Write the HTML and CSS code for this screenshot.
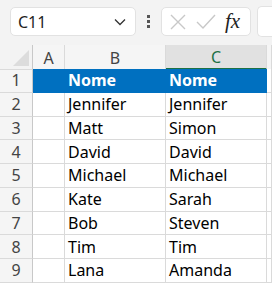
FILE: index.html
```html
<!DOCTYPE html>
<html lang="en">
<head>
    <meta charset="UTF-8">
    <title>Sheet</title>
    <link rel="stylesheet" href="styles.css">
</head>
<body>
    <div class="toolbar">
        <div class="name-box">
            <span class="cell-ref">C11</span>
            <svg class="chevron" width="12" height="8" viewBox="0 0 12 8"><path d="M1 1.5 L6 6.5 L11 1.5" fill="none" stroke="#333" stroke-width="1.3"/></svg>
        </div>
        <div class="dots"><i></i><i></i><i></i></div>
        <div class="formula-box">
            <svg width="20" height="20" viewBox="0 0 20 20"><path d="M3 3 L17 17 M17 3 L3 17" stroke="#c8c8c8" stroke-width="1.4"/></svg>
            <svg width="22" height="20" viewBox="0 0 22 20"><path d="M2 10 L8 16 L20 3" fill="none" stroke="#c8c8c8" stroke-width="1.4"/></svg>
            <span class="fx">fx</span>
        </div>
        <div class="formula-input"></div>
    </div>

    <div class="sheet">
        <div class="corner"><span class="triangle"></span></div>
        <div class="col-head">A</div>
        <div class="col-head">B</div>
        <div class="col-head selected">C</div>
        <div class="col-head rest"></div>
    </div>
    <div id="rows"></div>

    <script>
        const data = [
            ['Nome', 'Nome'],
            ['Jennifer', 'Jennifer'],
            ['Matt', 'Simon'],
            ['David', 'David'],
            ['Michael', 'Michael'],
            ['Kate', 'Sarah'],
            ['Bob', 'Steven'],
            ['Tim', 'Tim'],
            ['Lana', 'Amanda']
        ];
        const rows = document.getElementById('rows');

        data.forEach((row, i) => {
            const line = document.createElement('div');
            line.className = 'sheet row' + (i === 0 ? ' title' : '');
            line.innerHTML =
                `<div class="row-head">${i + 1}</div>` +
                `<div class="cell"></div>` +
                `<div class="cell">${row[0]}</div>` +
                `<div class="cell">${row[1]}</div>` +
                `<div class="cell rest"></div>`;
            rows.appendChild(line);
        });
    </script>
</body>
</html>
```

FILE: styles.css
```css
body {
    margin: 0;
    background-color: #ffffff;
    font-family: "Noto Sans", "Open Sans", sans-serif;
    overflow: hidden;
}
.toolbar {
    display: flex;
    align-items: center;
    height: 45px;
    padding-left: 10px;
    background-color: #f3f3f3;
    box-sizing: border-box;
    padding-bottom: 2px;
}
.name-box {
    display: flex;
    align-items: center;
    justify-content: space-between;
    width: 126px;
    height: 29px;
    padding: 0 9px 0 7px;
    box-sizing: border-box;
    background-color: #ffffff;
    border: 1px solid #e2e2e2;
    border-radius: 5px;
}
.cell-ref {
    font-size: 16px;
    color: #1f1f1f;
}
.dots {
    display: flex;
    flex-direction: column;
    gap: 2px;
    margin: 0 11px 0 11px;
}
.dots i {
    width: 3px;
    height: 3px;
    background-color: #555;
}
.formula-box {
    display: flex;
    align-items: center;
    gap: 7px;
    width: 90px;
    height: 29px;
    padding: 0 6px 0 6px;
    box-sizing: border-box;
    background-color: #ffffff;
    border: 1px solid #e2e2e2;
    border-radius: 5px;
}
.fx {
    font-family: "Liberation Serif", serif;
    font-style: italic;
    font-size: 21px;
    color: #222;
    margin-left: 1px;
}
.formula-input {
    flex: 1;
    height: 29px;
    margin-left: 6px;
    background-color: #ffffff;
    border: 1px solid #e2e2e2;
    border-right: none;
    border-radius: 5px 0 0 5px;
}
.sheet {
    display: grid;
    grid-template-columns: 33px 32px 101px 101px 1fr;
    height: 24px;
}
.corner, .col-head {
    background-color: #f5f5f5;
    border-right: 1px solid #dadada;
    border-bottom: 1px solid #dadada;
    box-sizing: border-box;
}
.corner {
    position: relative;
    background-color: #f3f3f3;
    border-right: 1px solid #c8c8c8;
}
.triangle {
    position: absolute;
    right: 3px;
    bottom: 3px;
    width: 0;
    height: 0;
    border-left: 16px solid transparent;
    border-bottom: 16px solid #dcdcdc;
}
.col-head {
    display: flex;
    align-items: center;
    justify-content: center;
    font-size: 16px;
    color: #444;
    padding-top: 1px;
}
.col-head.selected {
    background-color: #e1e1e1;
    border-bottom: 2px solid #1e7145;
    color: #1e7145;
}
.row {
    height: 23.75px;
}
.row-head {
    display: flex;
    align-items: center;
    justify-content: center;
    background-color: #f5f5f5;
    border-right: 1px solid #c8c8c8;
    border-bottom: 1px solid #dadada;
    box-sizing: border-box;
    font-size: 16px;
    color: #444;
}
.cell {
    display: flex;
    align-items: center;
    padding-left: 3px;
    border-right: 1px solid #dadada;
    border-bottom: 1px solid #dadada;
    box-sizing: border-box;
    font-size: 16px;
    color: #000;
}
.title .cell {
    background-color: #0070c0;
    color: #ffffff;
    font-weight: bold;
    border-color: #0070c0;
}
.title .cell:first-of-type {
    background-color: #ffffff;
    border-right: 1px solid #dadada;
    border-bottom: 1px solid #dadada;
}
.title .cell.rest {
    background-color: #ffffff;
    border-color: #dadada;
}
```
